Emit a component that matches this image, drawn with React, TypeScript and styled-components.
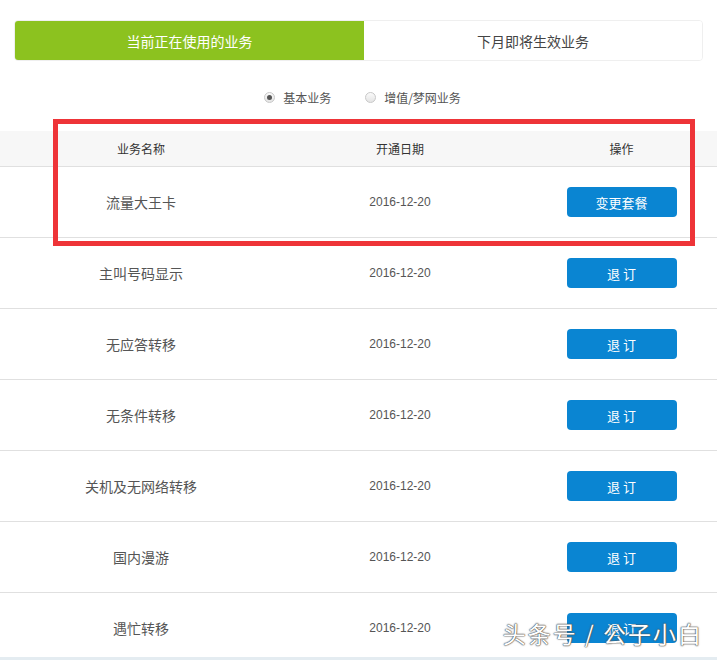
import React, { useState } from 'react';
import styled, { createGlobalStyle } from 'styled-components';

const GlobalStyle = createGlobalStyle`
  html, body {
    margin: 0;
    padding: 0;
    background: #fff;
  }
  body {
    font-family: 'Liberation Sans', 'Noto Sans CJK SC', sans-serif;
  }
`;

const Page = styled.div`
  position: relative;
  width: 717px;
  height: 660px;
  overflow: hidden;
  background: #fff;
  border-bottom: 3px solid #e4ecf1;
  box-sizing: border-box;
`;

const Tabs = styled.div`
  display: flex;
  margin: 20px 14px 0;
  height: 41px;
  border: 1px solid #efefef;
  border-radius: 4px;
  box-sizing: border-box;
  overflow: hidden;
`;

const Tab = styled.div<{ active?: boolean }>`
  flex: ${(p) => (p.active ? '0 0 349px' : '1')};
  display: flex;
  align-items: center;
  justify-content: center;
  font-family: 'Noto Sans CJK SC', sans-serif;
  font-size: 14px;
  color: ${(p) => (p.active ? '#fff' : '#444')};
  background: ${(p) => (p.active ? '#8cc21f' : '#fff')};
  cursor: pointer;
`;

const RadioRow = styled.div`
  display: flex;
  justify-content: center;
  align-items: center;
  gap: 34px;
  height: 26px;
  margin-top: 23px;
  padding-left: 8px;
`;

const RadioItem = styled.label`
  display: flex;
  align-items: center;
  gap: 8px;
  font-family: 'Noto Sans CJK SC', sans-serif;
  font-size: 12px;
  color: #555;
  cursor: pointer;
`;

const RadioDot = styled.span<{ checked?: boolean }>`
  width: 11px;
  height: 11px;
  border-radius: 50%;
  border: 1px solid #c8c8c8;
  background: linear-gradient(#fafafa, #e4e4e4);
  box-sizing: border-box;
  display: flex;
  align-items: center;
  justify-content: center;
  &::after {
    content: '';
    width: 5px;
    height: 5px;
    border-radius: 50%;
    background: ${(p) => (p.checked ? '#555' : 'transparent')};
  }
`;

const Table = styled.div`
  position: relative;
  margin-top: 21px;
`;

const Row = styled.div<{ head?: boolean }>`
  display: grid;
  grid-template-columns: 282px 236px 1fr;
  align-items: center;
  height: ${(p) => (p.head ? '36px' : '71px')};
  background: ${(p) => (p.head ? '#f7f7f7' : '#fff')};
  border-bottom: 1px solid #e0e0e0;
  box-sizing: border-box;
`;

const Cell = styled.div<{ head?: boolean; mono?: boolean }>`
  display: flex;
  justify-content: center;
  font-family: ${(p) =>
    p.mono ? "'Liberation Sans', sans-serif" : "'Noto Sans CJK SC', sans-serif"};
  font-size: ${(p) => (p.head || p.mono ? '12px' : '14px')};
  color: ${(p) => (p.head ? '#333' : '#555')};
  &:last-child {
    padding-left: 8px;
  }
`;

const ActionButton = styled.button`
  width: 110px;
  height: 30px;
  border: none;
  border-radius: 4px;
  background: #0a85d2;
  color: #fff;
  font-family: 'Noto Sans CJK SC', sans-serif;
  font-size: 13px;
  cursor: pointer;
`;

// red highlight drawn over the first rows
const Highlight = styled.div`
  position: absolute;
  top: -12px;
  left: 53px;
  width: 642px;
  height: 127px;
  border: 5px solid #ee3438;
  box-sizing: border-box;
  pointer-events: none;
`;

const Watermark = styled.div`
  position: absolute;
  right: 14px;
  bottom: 7px;
  font-family: 'Noto Sans CJK SC', sans-serif;
  font-size: 23px;
  color: #fff;
  letter-spacing: 2px;
  text-shadow: 0 0 1px #444, 0 0 1px #444, 0 0 2px #666;
`;

const rows = [
  { name: '流量大王卡', date: '2016-12-20', action: '变更套餐' },
  { name: '主叫号码显示', date: '2016-12-20', action: '退 订' },
  { name: '无应答转移', date: '2016-12-20', action: '退 订' },
  { name: '无条件转移', date: '2016-12-20', action: '退 订' },
  { name: '关机及无网络转移', date: '2016-12-20', action: '退 订' },
  { name: '国内漫游', date: '2016-12-20', action: '退 订' },
  { name: '遇忙转移', date: '2016-12-20', action: '退 订' },
];

const App = () => {
  const [tab, setTab] = useState(0);
  const [kind, setKind] = useState(0);

  return (
    <Page>
      <GlobalStyle />
      <Tabs>
        <Tab active={tab === 0} onClick={() => setTab(0)}>
          当前正在使用的业务
        </Tab>
        <Tab active={tab === 1} onClick={() => setTab(1)}>
          下月即将生效业务
        </Tab>
      </Tabs>
      <RadioRow>
        <RadioItem onClick={() => setKind(0)}>
          <RadioDot checked={kind === 0} />
          基本业务
        </RadioItem>
        <RadioItem onClick={() => setKind(1)}>
          <RadioDot checked={kind === 1} />
          增值/梦网业务
        </RadioItem>
      </RadioRow>
      <Table>
        <Row head>
          <Cell head>业务名称</Cell>
          <Cell head>开通日期</Cell>
          <Cell head>操作</Cell>
        </Row>
        {rows.map((r, i) => (
          <Row key={i}>
            <Cell>{r.name}</Cell>
            <Cell mono>{r.date}</Cell>
            <Cell>
              <ActionButton>{r.action}</ActionButton>
            </Cell>
          </Row>
        ))}
        <Highlight />
      </Table>
      <Watermark>头条号 / 公子小白</Watermark>
    </Page>
  );
};

export default App;
